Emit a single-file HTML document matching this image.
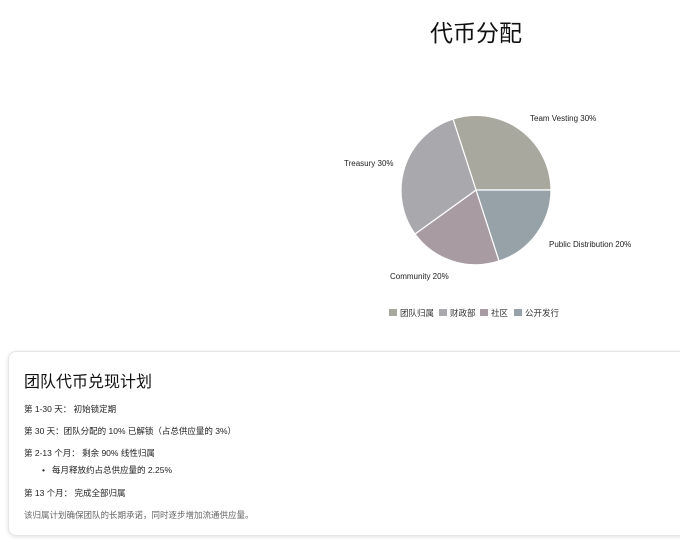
<!DOCTYPE html>
<html><head><meta charset="utf-8"><style>
body{margin:0;width:680px;height:544px;background:#fff;font-family:"Liberation Sans","Noto Sans CJK SC",sans-serif;overflow:hidden;position:relative;color:#222}
.t{position:absolute;left:0;width:952px;top:14px;text-align:center;font-size:23px;color:#111}
.card{position:absolute;left:8px;top:351px;width:700px;height:183px;border:1px solid #e6e6e6;border-radius:8px;box-shadow:0 1px 4px rgba(0,0,0,.12);background:#fff}
.card h2{position:absolute;left:15px;top:16px;margin:0;font-size:16px;font-weight:normal;color:#111}
.p{position:absolute;left:15px;font-size:8.5px;color:#222}
</style></head><body>
<div class="t">代币分配</div>
<svg style="position:absolute;left:0;top:0" width="680" height="340">
<g stroke="#fff" stroke-width="1.2">
<path d="M476,190 L453,119 A75,75 0 0 1 551,190 Z" fill="#a8a89e"/>
<path d="M476,190 L551,190 A75,75 0 0 1 499,261 Z" fill="#97a2a8"/>
<path d="M476,190 L499,261 A75,75 0 0 1 415,234 Z" fill="#a89ba2"/>
<path d="M476,190 L415,234 A75,75 0 0 1 453,119 Z" fill="#a9a9ad"/>
</g>
<g font-size="8" fill="#222" font-family="Liberation Sans, sans-serif">
<text x="530" y="121">Team Vesting 30%</text>
<text x="344" y="166">Treasury 30%</text>
<text x="549" y="247">Public Distribution 20%</text>
<text x="390" y="279">Community 20%</text>
</g>
<g font-size="8.5" fill="#333" font-family="Liberation Sans, Noto Sans CJK SC, sans-serif">
<rect x="389" y="309" width="8" height="7" fill="#a8a89e"/><text x="400" y="316">团队归属</text>
<rect x="439" y="309" width="8" height="7" fill="#a9a9ad"/><text x="450" y="316">财政部</text>
<rect x="480" y="309" width="8" height="7" fill="#a89ba2"/><text x="491" y="316">社区</text>
<rect x="514" y="309" width="8" height="7" fill="#97a2a8"/><text x="525" y="316">公开发行</text>
</g>
</svg>
<div class="card">
<h2>团队代币兑现计划</h2>
<div class="p" style="top:51px">第 1-30 天： 初始锁定期</div>
<div class="p" style="top:73px">第 30 天：团队分配的 10% 已解锁（占总供应量的 3%）</div>
<div class="p" style="top:95px">第 2-13 个月： 剩余 90% 线性归属</div>
<div class="p" style="top:112px;left:33px">•&nbsp;&nbsp;&nbsp;每月释放约占总供应量的 2.25%</div>
<div class="p" style="top:135px">第 13 个月： 完成全部归属</div>
<div class="p" style="top:157px;color:#666">该归属计划确保团队的长期承诺，同时逐步增加流通供应量。</div>
</div>
</body></html>
